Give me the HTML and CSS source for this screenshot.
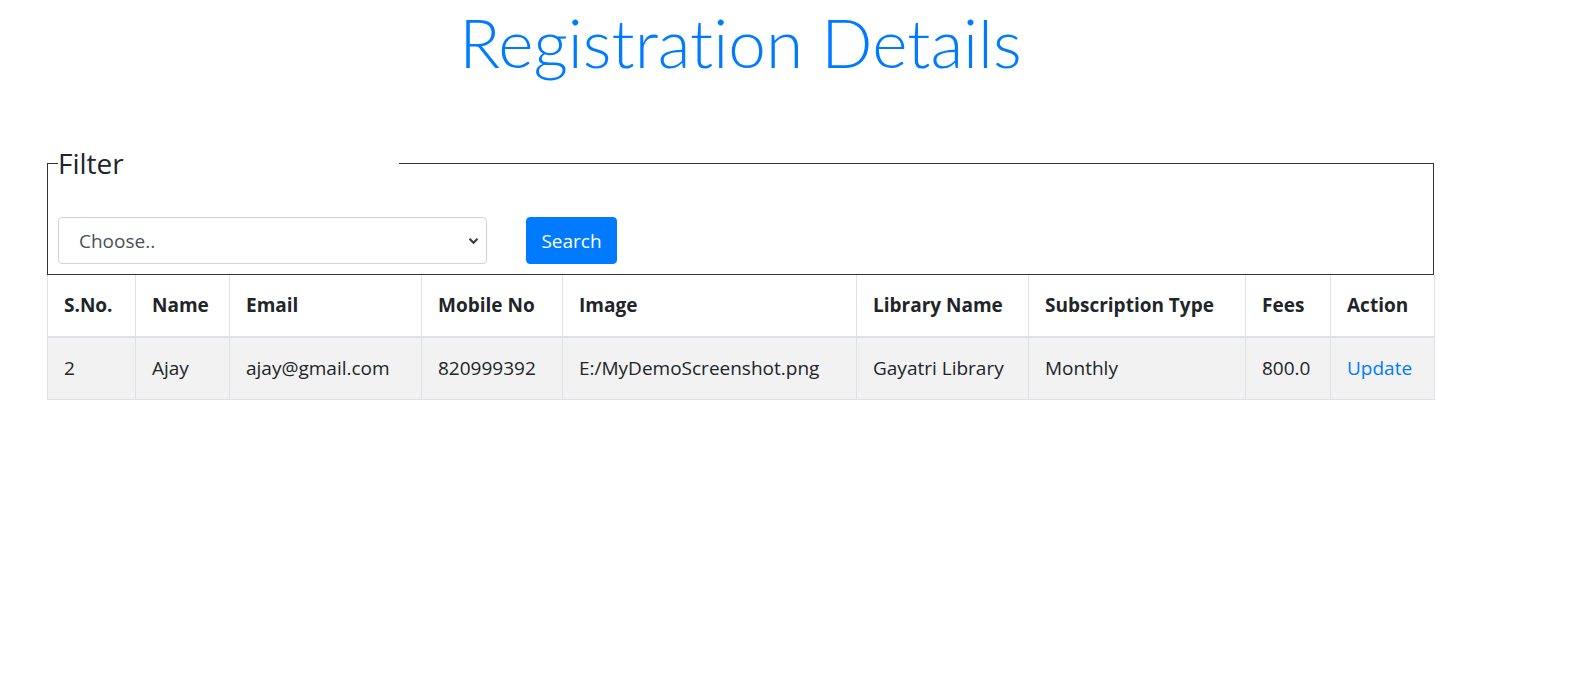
FILE: index.html
```html
<!DOCTYPE html>
<html lang="en">
<head>
<meta charset="utf-8">
<title>Registration Details</title>
<link rel="stylesheet" href="styles.css">
</head>
<body>
<div class="page">
  <h1 class="title">Registration Details</h1>
  <fieldset class="filter">
    <legend class="filter-legend">Filter</legend>
    <div class="filter-row">
      <div class="select-wrap">
        <select class="select">
          <option>Choose..</option>
        </select>
        <svg class="chevron" width="11" height="8" viewBox="0 0 11 8"><path d="M1.5 1.8 L5.5 5.8 L9.5 1.8" fill="none" stroke="#343a40" stroke-width="2"/></svg>
      </div>
      <button class="btn">Search</button>
    </div>
  </fieldset>
  <table class="table">
    <colgroup>
      <col class="c1"><col class="c2"><col class="c3"><col class="c4"><col class="c5"><col class="c6"><col class="c7"><col class="c8"><col class="c9">
    </colgroup>
    <thead>
      <tr>
        <th>S.No.</th><th>Name</th><th>Email</th><th>Mobile No</th><th>Image</th><th>Library Name</th><th>Subscription Type</th><th>Fees</th><th>Action</th>
      </tr>
    </thead>
    <tbody>
      <tr>
        <td>2</td><td>Ajay</td><td>ajay@gmail.com</td><td>820999392</td><td>E:/MyDemoScreenshot.png</td><td>Gayatri Library</td><td>Monthly</td><td>800.0</td><td><a class="link" href="#">Update</a></td>
      </tr>
    </tbody>
  </table>
</div>
</body>
</html>
```
FILE: styles.css
```css
html, body {
  margin: 0;
  padding: 0;
  background: #fff;
}
body {
  font-family: "Open Sans", "Noto Sans", sans-serif;
  color: #212529;
  font-size: 19px;
  line-height: 1.5;
}
.page {
  width: 1387px;
  margin-left: 47px;
}
.title {
  margin: 0;
  text-align: center;
  font-family: Lato, "Open Sans", sans-serif;
  font-size: 67.5px;
  font-weight: 300;
  font-variant-ligatures: none;
  font-feature-settings: "liga" 0;
  line-height: 84px;
  color: #007bff;
  height: 141px;
}
.filter {
  margin: 0;
  padding: 0 10px 10px 10px;
  border: 1px solid #333;
  min-width: 0;
}
.filter-legend {
  width: 341px;
  padding: 0;
  font-size: 28px;
  line-height: 44px;
  color: #212529;
}
.filter-row {
  display: flex;
  align-items: center;
  gap: 39px;
  margin-top: 32px;
}
.select-wrap {
  position: relative;
  width: 429px;
}
.select {
  appearance: none;
  -webkit-appearance: none;
  width: 100%;
  height: 47px;
  border: 1px solid #ced4da;
  border-radius: 4px;
  background: #fff;
  padding: 0 40px 0 20px;
  font-family: inherit;
  font-size: 19px;
  color: #495057;
  display: block;
}
.chevron {
  position: absolute;
  right: 8px;
  top: 20px;
}
.btn {
  width: 91px;
  height: 47px;
  border: 1px solid #007bff;
  background: #007bff;
  color: #fff;
  border-radius: 4px;
  font-family: inherit;
  font-size: 19px;
  padding: 0;
}
.table {
  width: 100%;
  border-collapse: collapse;
  table-layout: fixed;
}
.c1 { width: 88px; }
.c2 { width: 94px; }
.c3 { width: 192px; }
.c4 { width: 141px; }
.c5 { width: 294px; }
.c6 { width: 172px; }
.c7 { width: 217px; }
.c8 { width: 85px; }
.c9 { width: 104px; }
.table th, .table td {
  border: 1px solid #dee2e6;
  padding: 16px 16px;
  text-align: left;
  vertical-align: top;
  white-space: nowrap;
  line-height: 29px;
}
.table th {
  font-weight: 700;
  border-top: 0;
  border-bottom: 2px solid #dee2e6;
}
.table tbody tr {
  background: #f2f2f2;
}
.link {
  color: #007bff;
  text-decoration: none;
}
```
